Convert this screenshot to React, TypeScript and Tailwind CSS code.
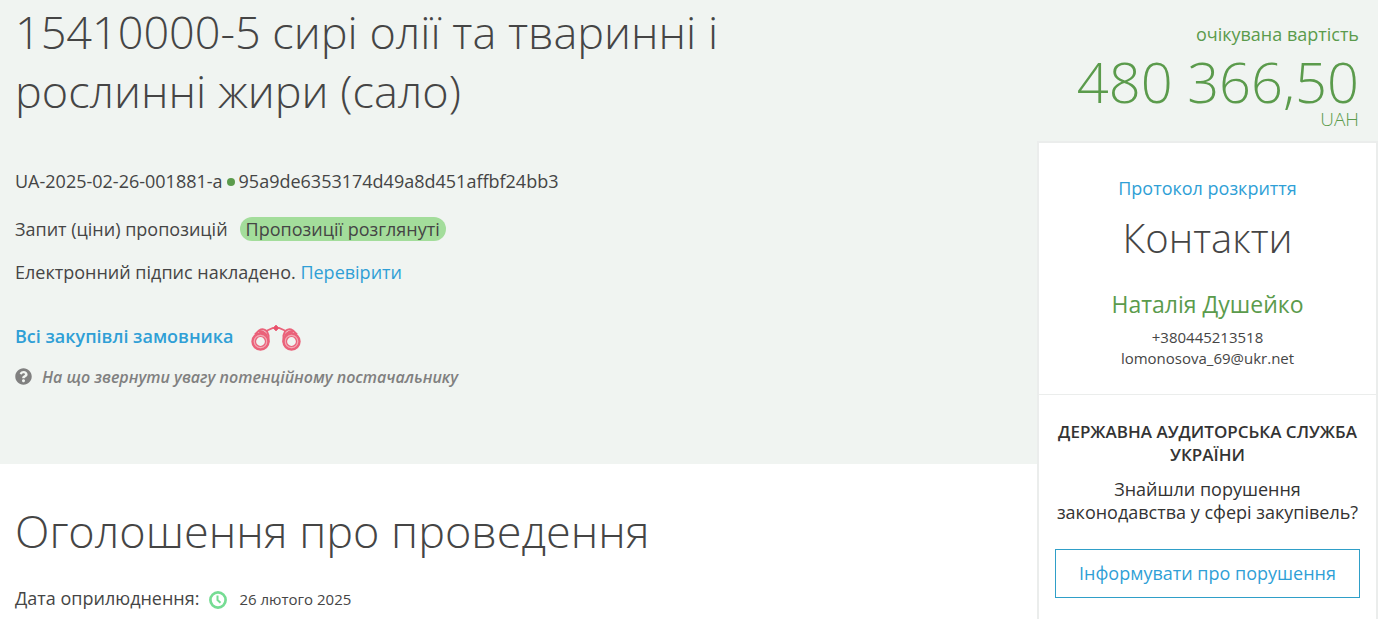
import React from "react";
import { FaQuestionCircle } from "react-icons/fa";

const ClockIcon = () => {
  return (
    <svg
      viewBox="0 0 18 18"
      className="ml-[10px] mt-1 size-[18px]"
      fill="none"
      stroke="#75dc93"
      aria-hidden="true"
    >
      <circle cx="9" cy="9" r="7.6" strokeWidth="2.7" />
      <path d="M8.500 4.500V9l3 2.800" strokeWidth="2" />
    </svg>
  );
};

const BinocularsIcon = () => {
  return (
    <svg
      viewBox="0 0 52 28"
      className="w-[52px] h-7"
      fill="none"
      stroke="#ea627a"
      aria-hidden="true"
    >
      <circle cx="10.500" cy="17.500" r="7" fill="#f3a9b4" strokeWidth="0" />
      <circle cx="10.500" cy="17.500" r="8" strokeWidth="2.400" />
      <circle cx="10.500" cy="17.500" r="5" fill="#f0f4f1" strokeWidth="1.200" />
      <circle cx="41.500" cy="17.500" r="7" fill="#f3a9b4" strokeWidth="0" />
      <circle cx="41.500" cy="17.500" r="8" strokeWidth="2.400" />
      <circle cx="41.500" cy="17.500" r="5" fill="#f0f4f1" strokeWidth="1.200" />
      <path d="M5 10.500 9 6.500q4.500-3 8 1l1.500 4v7" strokeWidth="2" />
      <path d="M47 10.500 43 6.500q-4.500-3-8 1l-1.500 4v7" strokeWidth="2" />
      <path d="M9 8q4-1.500 8 4M43 8q-4-1.500-8 4" strokeWidth="2.600" />
      <path d="M16 7l7-3h6l7 3" strokeWidth="1.800" />
      <path d="M26 1l3 3-3 3-3-3z" fill="#e8516b" strokeWidth="0.800" />
    </svg>
  );
};

const TenderHeader = () => {
  return (
    <header className="bg-[#f0f4f1] h-[464px] px-[15px] pt-0.5">
      <h1 className="max-w-[720px] text-[45px] leading-[59px] font-light">
        15410000-5 сирі олії та тваринні і рослинні жири (сало)
      </h1>
      <p className="mt-[49px] flex items-center gap-1">
        UA-2025-02-26-001881-a
        <span className="size-2 mt-0.5 rounded-full bg-[#5b9b4c]" />
        95a9de6353174d49a8d451affbf24bb3
      </p>
      <p className="mt-6 flex items-center gap-3">
        Запит (ціни) пропозицій
        <span className="rounded-full bg-[#a3dd9b] px-1.5">
          Пропозиції розглянуті
        </span>
      </p>
      <p className="mt-[19px]">
        Електронний підпис накладено.{" "}
        <a href="#sign" className="text-[#2f9fd6]">
          Перевірити
        </a>
      </p>
      <div className="mt-10 flex items-start gap-[17px]">
        <a href="#customer" className="text-[#2f9fd6] font-semibold">
          Всі закупівлі замовника
        </a>
        <BinocularsIcon />
      </div>
      <p className="mt-[13px] flex items-center gap-2.5 text-[#808080]">
        <FaQuestionCircle className="size-[17px] mb-0.5" />
        <span className="text-[16px] italic font-semibold">
          На що звернути увагу потенційному постачальнику
        </span>
      </p>
    </header>
  );
};

const Announcement = () => {
  return (
    <section className="px-[15px] pt-[37px]">
      <h2 className="text-[45px] leading-[59px] font-light">
        Оголошення про проведення
      </h2>
      <p className="mt-[25px] flex items-center">
        Дата оприлюднення:
        <ClockIcon />
        <span className="ml-3 mt-0.5 text-[15px]">26 лютого 2025</span>
      </p>
    </section>
  );
};

const Sidebar = () => {
  return (
    <aside className="w-[341px] shrink-0 flex flex-col">
      <div className="bg-[#f0f4f1] h-[141px] pt-[22px] pr-[19px] text-right text-[#5b9b4c]">
        <p>очікувана вартість</p>
        <p className="pt-1 text-[56px] leading-[62px] font-light">480 366,50</p>
        <p className="-mt-[5px] text-[19px] font-light">UAH</p>
      </div>
      <div className="grow border-2 border-b-0 border-[#ebedec] bg-white text-center">
        <div className="h-[252px] border-b border-[#ebedec] pt-[33px]">
          <a href="#protocol" className="block text-[#2f9fd6]">
            Протокол розкриття
          </a>
          <h3 className="mt-3 text-[40px] leading-[52px] font-light">
            Контакти
          </h3>
          <p className="mt-6 text-[23px] leading-8 text-[#5b9b4c]">
            Наталія Душейко
          </p>
          <p className="mt-[7px] text-[15px] leading-[21px]">+380445213518</p>
          <p className="text-[15px] leading-[21px]">lomonosova_69@ukr.net</p>
        </div>
        <div className="px-4 pt-[25px] pb-5 leading-[23px] text-[#333333]">
          <h4 className="font-semibold text-[17px]">
            ДЕРЖАВНА АУДИТОРСЬКА СЛУЖБА УКРАЇНИ
          </h4>
          <p className="mt-3">Знайшли порушення законодавства у сфері закупівель?</p>
          <button
            type="button"
            className="mt-[25px] w-full h-[49px] border border-[#2f9fc8] text-[#2f9fd6]"
          >
            Інформувати про порушення
          </button>
        </div>
      </div>
    </aside>
  );
};

const App = () => {
  return (
    <div className="flex min-h-screen bg-white font-['Open_Sans',sans-serif] text-[18px] leading-6 text-[#454545]">
      <main className="grow min-w-0">
        <TenderHeader />
        <Announcement />
      </main>
      <Sidebar />
    </div>
  );
};

export default App;
